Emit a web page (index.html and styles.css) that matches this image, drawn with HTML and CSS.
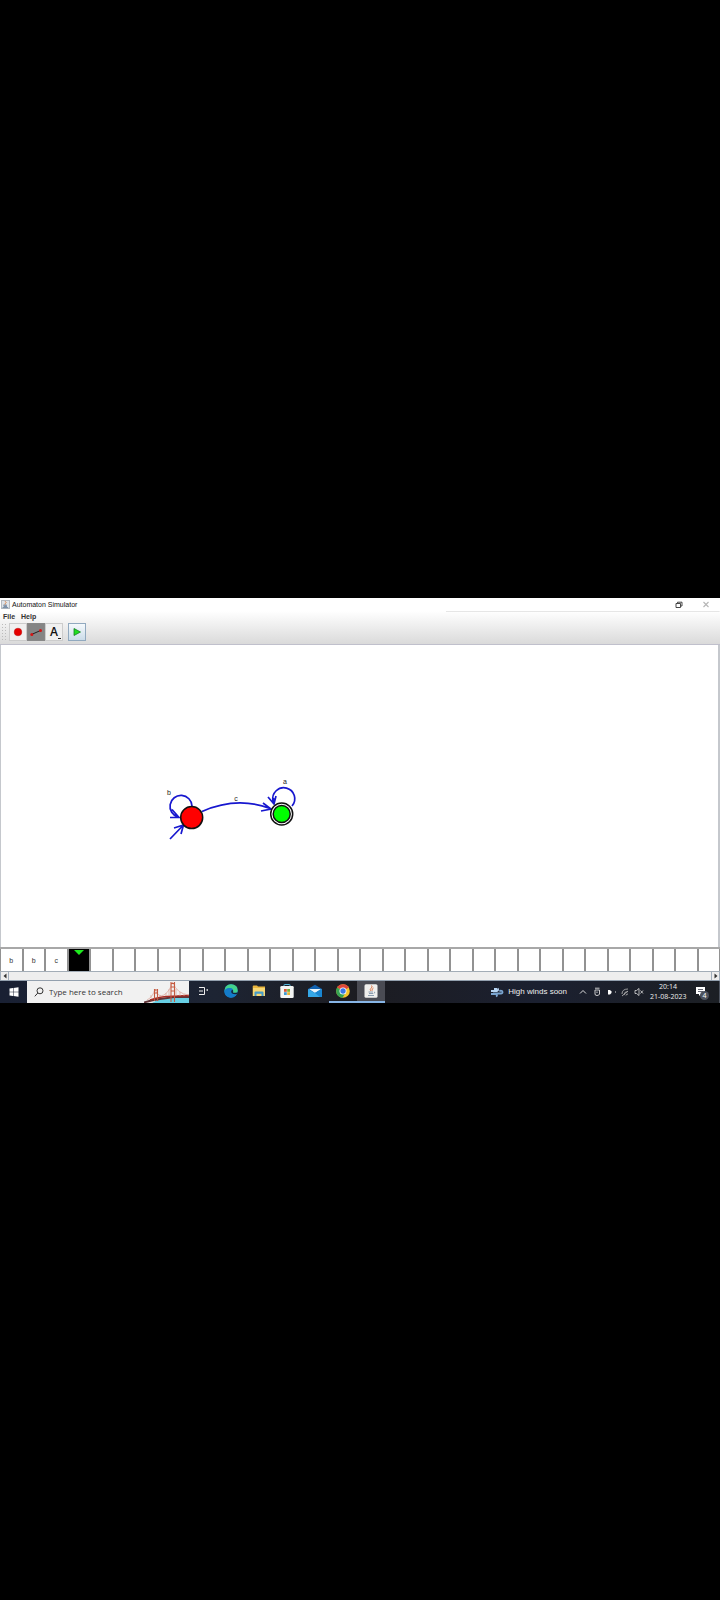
FILE: index.html
```
<!DOCTYPE html>
<html lang="en">
<head>
<meta charset="utf-8">
<meta name="viewport" content="width=device-width, initial-scale=1">
<title>Automaton Simulator</title>
<link rel="stylesheet" href="styles.css">
</head>
<body>
<div class="screen">
  <main class="app">
    <header class="titlebar">
      <svg class="title-icon" viewBox="0 0 9 9" aria-hidden="true"><rect x=".5" y=".5" width="8" height="8" fill="#dfe4e9" stroke="#b3b9c0"/><path d="M4 1.2Q6 2.4 4.5 3.4T4.6 5" fill="none" stroke="#d98246"/><path d="M2.2 5.2H6M2.6 6.4H6M1.6 7.6H7.2" stroke="#54708f" stroke-width=".8"/></svg>
      <h1 class="title">Automaton Simulator</h1>
      <button class="win-btn" aria-label="Restore"><svg width="8" height="8" viewBox="0 0 8 8"><path d="M1 2.5H5.5V6.5H1ZM2.5 2V1.200H7V5H6" fill="none" stroke="#333" stroke-width=".9"/></svg></button>
      <button class="win-btn" aria-label="Close"><svg width="8" height="8" viewBox="0 0 8 8"><path d="M1.5 1L6.5 6M6.5 1L1.5 6" stroke="#b5b5b5" stroke-width="1.1"/></svg></button>
    </header>
    <div class="chrome">
      <nav class="menu">
        <button class="menu-btn">File</button>
        <button class="menu-btn">Help</button>
      </nav>
      <div class="toolbar">
        <span class="grip"></span>
        <button class="tool" aria-label="State"><svg width="16" height="16" viewBox="0 0 16 16"><circle cx="8" cy="8" r="3.800" fill="#e60000" stroke="#b80a0a" stroke-width=".5"/></svg></button>
        <button class="tool tool-active" aria-label="Transition"><svg width="16" height="16" viewBox="0 0 16 16"><path d="M3.500 10.500L12.500 6.500" stroke="#222"/><circle cx="3.800" cy="10.400" r="1.500" fill="#d41414"/><circle cx="12.500" cy="6.500" r="1.500" fill="#d41414"/></svg></button>
        <button class="tool tool-text" aria-label="Text"><span>A</span><i class="corner"></i></button>
        <button class="tool tool-run" aria-label="Run"><svg width="16" height="16" viewBox="0 0 16 16"><path d="M5 4.500L11.500 8L5 11.500Z" fill="#1ee01e" stroke="#187c28" stroke-width=".8"/></svg></button>
      </div>
    </div>
    <svg class="canvas" viewBox="0 645 720 302" preserveAspectRatio="xMinYMin meet" role="img" aria-label="Automaton">
      <g class="edge">
        <path d="M192 806A11 11 0 1 0 178 817M170 817.500H179L172 809.500"/>
        <path d="M170 839L183 825.500M174 828L183.500 825L181 834"/>
        <path d="M202 811.500Q237 796 270 808.500M263 803L271 809L261 811"/>
        <path d="M292 806A11 11 0 1 0 273 801M268 797L274 804L276 796M273.500 804V798"/>
      </g>
      <circle class="node node-start" cx="191.700" cy="817.600" r="11"/>
      <circle class="node node-ring" cx="281.700" cy="814" r="11"/>
      <circle class="node node-final" cx="281.700" cy="814" r="8.500"/>
      <text class="edge-label" x="169" y="795">b</text>
      <text class="edge-label" x="236" y="801">c</text>
      <text class="edge-label" x="285" y="784">a</text>
    </svg>
    <div class="tape">
      <span class="cell">b</span><span class="cell">b</span><span class="cell">c</span><span class="cell cell-current"></span>
      <span class="cell"></span><span class="cell"></span><span class="cell"></span><span class="cell"></span>
      <span class="cell"></span><span class="cell"></span><span class="cell"></span><span class="cell"></span>
      <span class="cell"></span><span class="cell"></span><span class="cell"></span><span class="cell"></span>
      <span class="cell"></span><span class="cell"></span><span class="cell"></span><span class="cell"></span>
      <span class="cell"></span><span class="cell"></span><span class="cell"></span><span class="cell"></span>
      <span class="cell"></span><span class="cell"></span><span class="cell"></span><span class="cell"></span>
      <span class="cell"></span><span class="cell"></span><span class="cell"></span><span class="cell"></span>
    </div>
    <div class="scroll">
      <button class="scroll-btn" aria-label="Scroll left"><svg width="4" height="6" viewBox="0 0 4 6"><path d="M3.500 .5V5.500L.5 3Z" fill="#333"/></svg></button>
      <span class="track"></span>
      <button class="scroll-btn" aria-label="Scroll right"><svg width="4" height="6" viewBox="0 0 4 6"><path d="M.5 .5V5.500L3.500 3Z" fill="#333"/></svg></button>
    </div>
  </main>
  <footer class="taskbar">
    <button class="start" aria-label="Start"><svg width="10" height="10" viewBox="0 0 10 10"><path d="M.5 1.500L4 1V4.700H.5ZM4.500 .9L9.500 .2V4.700H4.500ZM.5 5.200H4V9L.5 8.500ZM4.500 5.200H9.500V9.800L4.500 9.100Z" fill="#fff"/></svg></button>
    <div class="search">
      <svg width="10" height="10" viewBox="0 0 10 10" aria-hidden="true"><circle cx="6" cy="3.800" r="3" fill="none" stroke="#333"/><path d="M3.800 6L.8 9.300" stroke="#333"/></svg>
      <input class="search-input" type="text" placeholder="Type here to search" aria-label="Type here to search">
      <svg class="bridge" width="45" height="22" viewBox="0 0 45 22" aria-hidden="true">
        <path d="M8 22Q14 17.500 28 17H45V22Z" fill="#67cfe4"/>
        <path d="M0 21.500Q8 19 16 18T30 16H45" fill="none" stroke="#5f3438" stroke-width="2"/>
        <path d="M6 19Q16 15.500 28 15.200L45 14.500" fill="none" stroke="#a52c25" stroke-width="1.500"/>
        <path d="M3 19Q9 16 11 8Q14 17 20 14Q26 10 28.500 1Q33 13 45 14M7 17V14M16 14V16M22 12V15M25 8V15M32 8V15M36 11V15M40 13V15" fill="none" stroke="#dba497" stroke-width=".7"/>
        <path d="M10.500 20V8M13.500 20V8M10.500 9H13.500M10.500 12H13.500M27 21V1M30.500 21V1M27 2.500H30.500M27 6H30.500M27 10H30.500" stroke="#c55a40" stroke-width="1.100"/>
      </svg>
    </div>
    <nav class="apps">
      <button class="task" aria-label="Task view"><svg width="14" height="14" viewBox="0 0 14 14"><path d="M3 3.500H8.500V10.500H3M3 7H7" fill="none" stroke="#eee"/><path d="M10.500 6H12" stroke="#eee" stroke-width="1.500"/></svg></button>
      <button class="task" aria-label="Edge"><svg width="14" height="14" viewBox="0 0 14 14"><circle cx="7" cy="7" r="6.700" fill="#168bd5"/><path d="M.5 7Q1 .3 7 .3Q13.700.500 13.700 6.500Q13.500 9.500 9.500 9Q9.500 4.500 6 4.300Q2 4.300.500 7Z" fill="#43d28c"/><path d="M.4 7Q2 3.500 6 4Q9 4.200 9 6.500Q6.500 6.500 7 9Q8 11.500 12.500 10.500Q10 14 6 13.500Q.5 12.500.400 7Z" fill="#147bc9"/><path d="M8.800 6.300Q7.300 7.500 8.500 9Q10 10 13.500 9.300" fill="none" stroke="#14243a" stroke-width="1.500"/></svg></button>
      <button class="task" aria-label="File Explorer"><svg width="14" height="14" viewBox="0 0 14 14"><path d="M.7 2.500Q.7 1.500 1.700 1.500H5L6 2.500H13V12H.7Z" fill="#e9b53d"/><path d="M1 4H13V12H1Z" fill="#f7d773"/><path d="M2.500 12V8.500Q2.500 7.500 3.500 7.500H10.500Q11.500 7.500 11.500 8.500V12H9.500V9.700H4.500V12Z" fill="#459bc9"/></svg></button>
      <button class="task" aria-label="Store"><svg width="14" height="14" viewBox="0 0 14 14"><path d="M4 3V1Q4 .5 4.500 .5H9.500Q10 .5 10 1V3" fill="none" stroke="#54b8dd"/><rect x=".3" y="2" width="13.400" height="12" rx="1.300" fill="#f3f5f4"/><path fill="#d95535" d="M4 5H6.800V7.800H4Z"/><path fill="#75ad35" d="M7.200 5H10V7.800H7.200Z"/><path fill="#3f9bd2" d="M4 8.200H6.800V11H4Z"/><path fill="#e8b434" d="M7.200 8.200H10V11H7.200Z"/></svg></button>
      <button class="task" aria-label="Mail"><svg width="14" height="14" viewBox="0 0 14 14"><path d="M0 5L7 .8L14 5V13H0Z" fill="#1262af"/><path d="M1 5H13L7 9Z" fill="#e8f5fc"/><path d="M0 5L7 9L14 5V13H0Z" fill="#35a8e8"/><path d="M14 5L7 9L12 13H14Z" fill="#1986d2"/></svg></button>
      <button class="task task-open" aria-label="Chrome"><svg width="14" height="14" viewBox="0 0 14 14"><circle cx="7" cy="7" r="6.800" fill="#f5c52d"/><path d="M7 7L1.100 3.600A6.800 6.800 0 0 1 12.900 3.600Z" fill="#df463a"/><path d="M7 7L1.100 3.600A6.800 6.800 0 0 0 6.500 13.800L9.700 8.500Z" fill="#35a352"/><circle cx="7" cy="7" r="3.500" fill="#fff"/><circle cx="7" cy="7" r="2.700" fill="#3978e8"/></svg></button>
      <button class="task task-open task-current" aria-label="Java"><svg width="14" height="14" viewBox="0 0 14 14"><rect x=".5" y=".3" width="13" height="13.400" rx="1.500" fill="#f0efed"/><path d="M7.500 1.500Q9 3 7 4.300Q5.500 5.500 7 7M9.500 4Q7.500 5 8.200 6.700" fill="none" stroke="#df7544"/><path d="M4.500 8H9M5 9.500H9M4 11.500H10M10 8Q11.500 8 10 9.500" fill="none" stroke="#72889e" stroke-width=".8"/></svg></button>
    </nav>
    <div class="weather">
      <svg width="14" height="12" viewBox="0 0 14 12" aria-hidden="true"><path d="M1 5H7Q9 4 7.500 2.500M4 3H7" fill="none" stroke="#b7d5f2" stroke-width="1.800"/><path d="M3 7.500H11Q13.500 7 12 5Q10.500 4 9.500 5.500M1 8H6Q8 9.500 6 10.500" fill="none" stroke="#7aa5d0" stroke-width="1.800"/></svg>
      <span>High winds soon</span>
    </div>
    <div class="tray">
      <svg width="10" height="10" viewBox="0 0 10 10" aria-hidden="true"><path d="M2 6.500L5 3.500L8 6.500" fill="none" stroke="#ddd"/></svg>
      <svg width="10" height="10" viewBox="0 0 10 10" aria-hidden="true"><path d="M3 3V7Q3 8.500 5 8.500T7.500 7V3ZM3 1.200H7.500M5 4.500V6" fill="none" stroke="#ddd" stroke-width=".9"/></svg>
      <svg width="10" height="10" viewBox="0 0 10 10" aria-hidden="true"><path d="M2 3H4L5.500 4.500V6L4 7.500H2Z" fill="#fff"/><path d="M9 5H10" stroke="#ddd"/></svg>
      <svg width="10" height="10" viewBox="0 0 10 10" aria-hidden="true"><path d="M2 7Q2 2 8 2M4 8Q4 4.500 8 4.500M6 8.500Q6 7 8 7M2 9L8 4" fill="none" stroke="#aaa" stroke-width=".9"/></svg>
      <svg width="10" height="10" viewBox="0 0 10 10" aria-hidden="true"><path d="M1 3.500H2.500L5 1.500V8.500L2.500 6.500H1Z" fill="none" stroke="#ddd" stroke-width=".8"/><path d="M6.500 3.500L9 6.500M9 3.500L6.500 6.500" stroke="#ddd" stroke-width=".8"/></svg>
    </div>
    <div class="clock"><time>20:14</time><time>21-08-2023</time></div>
    <button class="notice" aria-label="Notifications"><svg width="12" height="12" viewBox="0 0 12 12"><path d="M1 1H10V8H6L4 10V8H1Z" fill="#fff"/><path d="M3 3.500H8M3 5.500H8" stroke="#222736" stroke-width=".7"/></svg><span class="badge">4</span></button>
  </footer>
</div>
</body>
</html>
```
FILE: styles.css
```
* { box-sizing: border-box; }
body { margin: 0; background: #000; font-family: "Liberation Sans", Arial, sans-serif; }
button { display: flex; align-items: center; justify-content: center; padding: 0; border: 0; background: none; font: inherit; color: inherit; }
svg { display: block; flex: none; }
.screen { min-height: 100vh; padding-top: 598px; }
.app { background: #fff; }

.titlebar { display: flex; align-items: center; height: 13px; padding: 0 1px; background: #fff; }
.title-icon { width: 9px; height: 9px; }
.title { flex: 1; margin: 0 0 0 2px; font: 7px/13px "Liberation Sans", Arial, sans-serif; color: #111; }
.win-btn { width: 27px; height: 13px; }

.chrome { border-bottom: 1px solid #c0c0cc; background: linear-gradient(#e6e6e6, #e6e6e6) right top / 38% 1px no-repeat, linear-gradient(#fff, #dadada); }
.menu { display: flex; gap: 6px; height: 12px; padding-left: 3px; }
.menu-btn { font-size: 7px; font-weight: bold; line-height: 12px; color: #333; }
.toolbar { display: flex; align-items: flex-start; height: 21px; padding-left: 1px; }
.grip { width: 7px; height: 18px; margin-right: 1px; background: radial-gradient(circle, #bbb 1px, transparent 1px) 0 0 / 3px 3px; }
.tool { position: relative; width: 18px; height: 18px; border: 1px solid #ccc; background: #f0f0f0; }
.tool-active { border-color: #888; background: #858585; }
.tool-text { font: 600 12px/16px "Open Sans", sans-serif; color: #111; }
.corner { position: absolute; right: 1px; bottom: 1px; width: 3px; height: 1px; background: #222; }
.tool-run { margin-left: 5px; border-color: #91a9bf; background: linear-gradient(#f5f9fc, #cbdce9); }

.canvas { width: 100%; height: 302px; background: #fff; box-shadow: inset 1px 0 #c5c8cd, inset -2px 0 #c5c8cd; }
.edge path { fill: none; stroke: #1717cf; stroke-width: 1.7px; }
.node { stroke: #111; stroke-width: 1.5px; }
.node-start { fill: #f00; }
.node-ring { fill: #fff; }
.node-final { fill: #0f0; }
.edge-label { font-size: 7px; text-anchor: middle; fill: #222; }

.tape { display: grid; grid-template-columns: repeat(32, 1fr); height: 25px; border-top: 2px solid #a8a8a8; border-bottom: 1px solid #a3adb7; }
.cell { display: flex; align-items: center; justify-content: center; border: solid #929292; border-width: 0 1px; background: #fff; font-size: 7px; color: #333; }
.cell-current { align-items: flex-start; background: #000; }
.cell-current::before { content: ""; margin-top: 1px; border: solid transparent; border-width: 5px 5px 0; border-top-color: #1eea1e; }
.scroll { display: flex; height: 9px; border-bottom: 1px solid #93a0ae; background: #eee; }
.scroll-btn { width: 9px; height: 8px; border: solid #a2afbd; border-width: 0 1px; }
.track { flex: 1; background: #eee; }

.taskbar { display: flex; align-items: stretch; height: 22px; border-right: 1px solid #4d535e; background: linear-gradient(90deg, #192033, #1d2433 30%, #1c1c21 50%, #1b2030 75%, #1c1f24); color: #eee; }
.start { width: 27px; }
.search { display: flex; align-items: center; width: 162px; padding-left: 7px; background: #f1f1f1; overflow: hidden; }
.search-input { flex: 1; min-width: 0; margin-left: 5px; padding: 0; border: 0; outline: 0; background: none; font: 8px/20px "Open Sans", sans-serif; color: #333; }
.search-input::placeholder { color: #333; opacity: 1; }
.apps { display: flex; }
.task { width: 28px; border-bottom: 2px solid transparent; }
.task-open { border-bottom-color: #87b5e6; background-clip: padding-box; }
.task-current { background-color: #4a4b53; }
.weather { display: flex; align-items: center; gap: 4px; margin-left: auto; font: 8px/22px "Liberation Sans", Arial, sans-serif; white-space: nowrap; }
.tray { display: flex; align-items: center; gap: 4px; margin-left: 11px; }
.clock { display: flex; flex-direction: column; justify-content: center; width: 36px; margin-left: 6px; font: 7px/10px "Open Sans", sans-serif; text-align: center; white-space: nowrap; }
.notice { position: relative; width: 12px; margin: 0 12px 0 9px; }
.badge { position: absolute; left: 5px; top: 10px; width: 9px; height: 9px; border-radius: 50%; background: #4c525d; font: 7px/9px "Open Sans", sans-serif; color: #fff; }
```
